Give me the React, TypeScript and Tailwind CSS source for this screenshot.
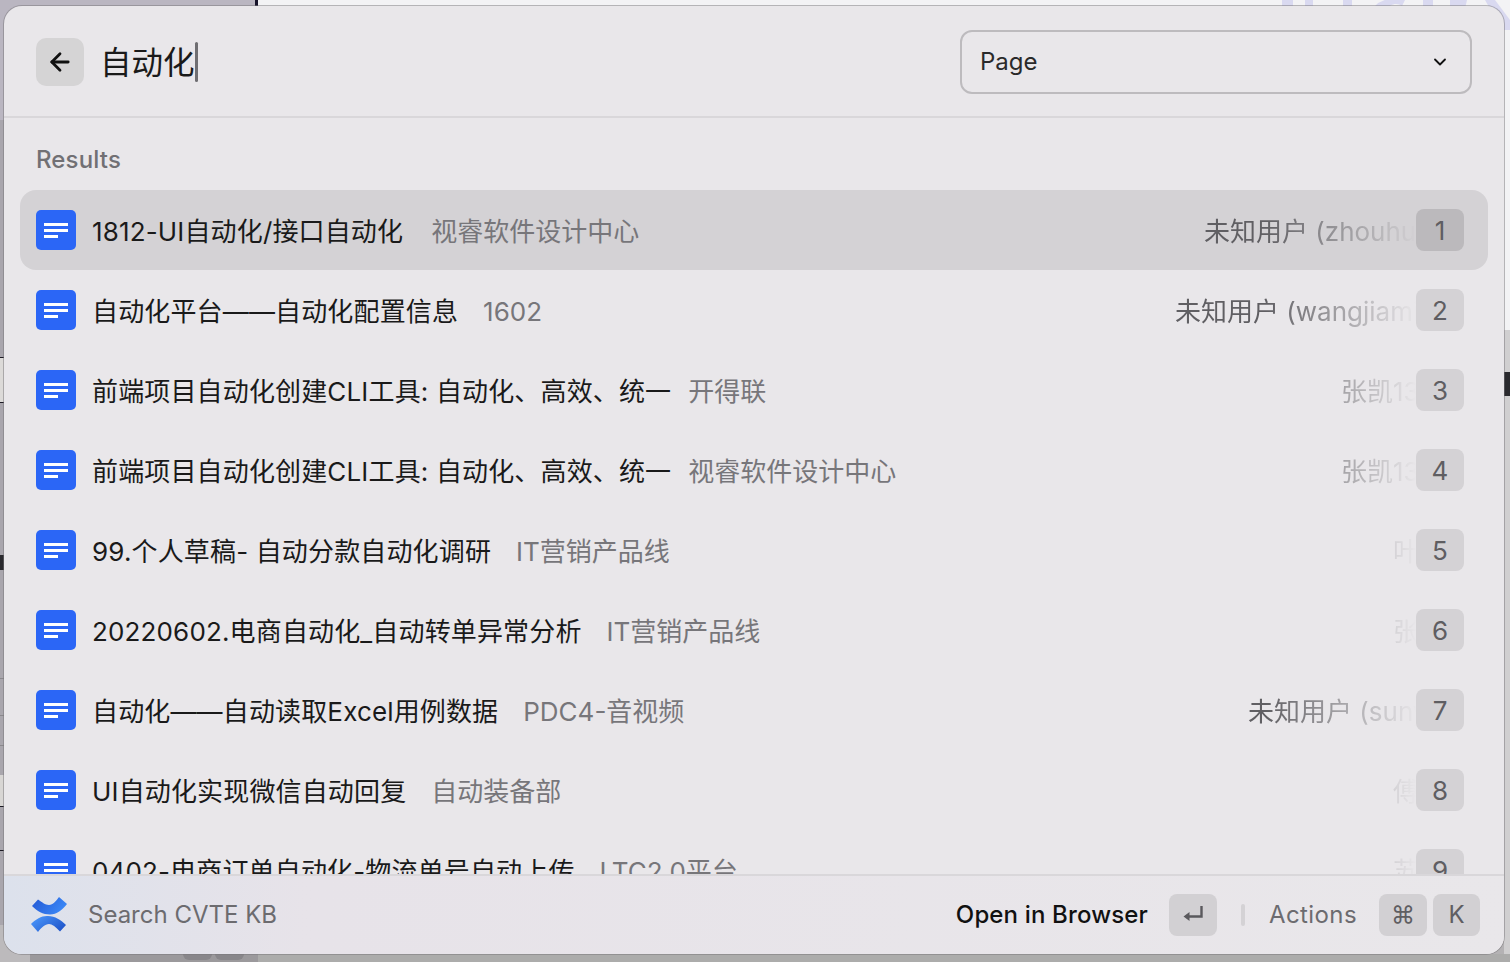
import { ArrowLeft, ChevronDown } from "lucide-react";

type Row = {
  title: string;
  space: string;
  spaceGap: string;
  author: string;
  authorWidth: string;
};

const rows: Row[] = [
  { title: "1812-UI自动化/接口自动化", space: "视睿软件设计中心", spaceGap: "ml-[28px]", author: "未知用户 (zhouhui)", authorWidth: "w-[212px]" },
  { title: "自动化平台——自动化配置信息", space: "1602", spaceGap: "ml-[25px]", author: "未知用户 (wangjiaming)", authorWidth: "w-[241px]" },
  { title: "前端项目自动化创建CLI工具: 自动化、高效、统一", space: "开得联", spaceGap: "ml-[17px]", author: "张凯1314", authorWidth: "w-[75px]" },
  { title: "前端项目自动化创建CLI工具: 自动化、高效、统一", space: "视睿软件设计中心", spaceGap: "ml-[17px]", author: "张凯1314", authorWidth: "w-[75px]" },
  { title: "99.个人草稿- 自动分款自动化调研", space: "IT营销产品线", spaceGap: "ml-[25px]", author: "叶子", authorWidth: "w-[23px]" },
  { title: "20220602.电商自动化_自动转单异常分析", space: "IT营销产品线", spaceGap: "ml-[25px]", author: "张三", authorWidth: "w-[23px]" },
  { title: "自动化——自动读取Excel用例数据", space: "PDC4-音视频", spaceGap: "ml-[25px]", author: "未知用户 (sunyang)", authorWidth: "w-[168px]" },
  { title: "UI自动化实现微信自动回复", space: "自动装备部", spaceGap: "ml-[25px]", author: "傅强", authorWidth: "w-[23px]" },
  { title: "0402-电商订单自动化-物流单号自动上传", space: "LTC2.0平台", spaceGap: "ml-[25px]", author: "苏宁", authorWidth: "w-[23px]" },
];

function DocIcon() {
  return (
    <div className="flex h-10 w-10 shrink-0 flex-col justify-center gap-[3px] rounded-[5px] bg-[#2b66f6] pl-2">
      <div className="h-[3px] w-6 bg-white" />
      <div className="h-[3px] w-6 bg-white" />
      <div className="h-[3px] w-[14px] bg-white" />
    </div>
  );
}

function ConfluenceLogo() {
  return (
    <svg width="46" height="46" viewBox="0 0 46 46" className="shrink-0">
      <defs>
        <linearGradient id="swoopA" x1="0" y1="0" x2="1" y2="0.4">
          <stop offset="0" stopColor="#2257d4" />
          <stop offset="1" stopColor="#3a86f5" />
        </linearGradient>
        <linearGradient id="swoopB" x1="0" y1="0.2" x2="1" y2="0.8">
          <stop offset="0" stopColor="#4a96fa" />
          <stop offset="1" stopColor="#1d52c8" />
        </linearGradient>
      </defs>
      <path d="M6 14 L12 7.500 C16 10 19 13 23 13 C27 13 30 9 33 5 L41 12 C36 18 31 22.500 24 22.500 C17 22.500 11 19 6 14 Z" fill="url(#swoopA)" />
      <path d="M5 32 C10 27 16 23.500 22 24 C29 24 35 28 40 33 L34 39.500 C30 35 26 32 23 32 C19 32 15 36 12 40 Z" fill="url(#swoopB)" />
    </svg>
  );
}

function ReturnIcon() {
  return (
    <svg width="20" height="16" viewBox="0 0 20 16" className="mb-[3px] text-[#5a595d]">
      <path d="M5 10.500 H18.500 V0" fill="none" stroke="currentColor" strokeWidth="2.400" />
      <path d="M0.500 10.500 L6.500 6 V15 Z" fill="currentColor" />
    </svg>
  );
}

function DesktopBehind() {
  return (
    <>
      <div className="absolute left-0 top-0 h-[962px] w-[258px] bg-[#a9a6ad]" />
      <div className="absolute left-0 top-0 h-[120px] w-[255px] bg-[#bab6c1]" />
      <div className="absolute left-[255px] top-0 h-[6px] w-[3px] bg-[#17132a]" />
      <div className="absolute right-0 top-0 h-[330px] w-[1252px] bg-[#f3f3f5]" />
      <div className="absolute right-0 top-[330px] h-[624px] w-[6px] bg-[#d0cfd0]" />
      <div className="absolute right-0 top-[372px] h-6 w-[6px] bg-[#2a2a2e]" />
      <div className="absolute left-0 top-[357px] h-[46px] w-1 border-y border-[#1c1a24] bg-[#dcdad8]" />
      <div className="absolute left-0 top-[555px] h-[15px] w-1 bg-[#2a2a2e]" />
      <div className="absolute left-0 top-[678px] h-px w-1 bg-[#8a888c]" />
      <div className="absolute left-0 top-[715px] h-px w-1 bg-[#8a888c]" />
      <div className="absolute left-0 top-[745px] h-px w-1 bg-[#8a888c]" />
      <div className="absolute left-0 top-[775px] h-8 w-1 border-b border-[#1c1a24] bg-[#d8d6d4]" />
      <div className="absolute left-0 top-[850px] h-px w-1 bg-[#1c1a24]" />
      <div className="absolute left-0 top-[925px] h-[37px] w-[30px] bg-[#bcbabc]" />
      <div className="absolute left-[30px] top-[954px] h-2 w-[228px] bg-[#9b999c]" />
      <div className="absolute left-[183px] top-[954px] h-[6px] w-[29px] rounded-b-md bg-[#88868a]" />
      <div className="absolute left-[215px] top-[954px] h-[6px] w-[29px] rounded-b-md bg-[#88868a]" />
      <div className="absolute left-[258px] top-[954px] h-2 w-[1252px] bg-[#acacab]" />
      <svg width="240" height="30" viewBox="0 0 240 30" className="absolute left-[1270px] top-0 text-[#d9d9f0]">
        <path d="M12 0 H23 V30 H12 Z M35 0 H43 V30 H35 Z M73 0 H82 V30 H73 Z M105 6 A20 20 0 0 1 125 0 H135 L132 6 A10 10 0 0 0 118 8 Z M153 0 H163 V30 H153 Z M180 0 H197 L190 30 H180 Z M215 0 H225 L240 20 V30 H232 Z" fill="currentColor" />
      </svg>
    </>
  );
}

function ResultRow({ row, index }: { row: Row; index: number }) {
  const selected = index === 0;
  return (
    <div
      className={`mx-4 flex h-20 shrink-0 items-center rounded-2xl pl-4 pr-6 ${selected ? "bg-[#d4d2d5]" : ""}`}
    >
      <DocIcon />
      <span className="ml-4 whitespace-nowrap pt-0.5 tracking-[0.15px] text-[#1a1a1a]">{row.title}</span>
      <span className={`whitespace-nowrap pt-0.5 text-[#77767a] ${row.spaceGap}`}>{row.space}</span>
      <div className="ml-auto flex w-[300px] justify-end pt-0.5 [mask-image:linear-gradient(to_right,black_50%,transparent_100%)]">
        <div className={`overflow-hidden whitespace-nowrap text-[#605f63] ${row.authorWidth}`}>{row.author}</div>
      </div>
      <div
        className={`flex h-[42px] w-12 shrink-0 items-center justify-center rounded-lg text-[#5f5e62] ${selected ? "bg-[#bbb9bc]" : "bg-[#d4d2d5]"}`}
      >
        {index + 1}
      </div>
    </div>
  );
}

export default function App() {
  return (
    <div className="relative flex h-[962px] w-[1510px] overflow-hidden bg-[#b4b2b4] font-['Inter','Noto_Sans_CJK_SC',sans-serif]">
      <DesktopBehind />

      <div className="absolute left-1 top-[6px] flex h-[948px] w-[1500px] flex-col overflow-hidden rounded-[18px] bg-[#e9e7ea] shadow-[0_0_0_1px_rgba(120,118,122,0.5)]">
        <header className="flex h-[112px] shrink-0 items-center border-b-2 border-[#d9d7da] pl-8 pr-8 pt-[2px]">
          <div className="flex h-12 w-12 shrink-0 items-center justify-center rounded-[10px] bg-[#d5d4d5] text-[#111]">
            <ArrowLeft size={28} strokeWidth={2.4} />
          </div>
          <div className="ml-4 flex h-12 items-center text-[31.5px] text-[#1a1a1a]">
            <span className="pt-[2px]">自动化</span>
            <span className="h-10 w-[3px] rounded-sm bg-[#6f6e72]" />
          </div>
          <div className="ml-auto flex h-16 w-[512px] items-center justify-between rounded-[12px] border-2 border-[#bdbbbe] pl-[18px] pr-[20px] text-[24px] text-[#2a2a2a]">
            Page
            <ChevronDown size={20} strokeWidth={2.2} className="text-[#111]" />
          </div>
        </header>

        <div className="flex min-h-0 flex-1 flex-col overflow-hidden text-[26px]">
          <div className="h-[72px] shrink-0 pl-8 pt-[27px] text-[24px] font-medium leading-[30px] tracking-[0.15px] text-[#717074]">
            Results
          </div>
          {rows.map((row, index) => (
            <ResultRow key={index} row={row} index={index} />
          ))}
        </div>

        <footer className="flex h-20 shrink-0 items-center border-t-2 border-[#d9d7da] bg-gradient-to-r from-[#dce1ec] via-[#e7e3e9] via-20% to-[#e9e7ea] pl-[22px] pr-6 text-[24px]">
          <ConfluenceLogo />
          <span className="ml-4 text-[#6c6b6f]">Search CVTE KB</span>
          <span className="ml-auto font-medium tracking-[0.15px] text-[#111]">Open in Browser</span>
          <div className="ml-[21px] flex h-[42px] w-12 items-center justify-center rounded-lg bg-[#d2d0d3]">
            <ReturnIcon />
          </div>
          <div className="ml-6 h-[22px] w-1 rounded-sm bg-[#d4d2d5]" />
          <span className="ml-6 tracking-[0.4px] text-[#6c6b6f]">Actions</span>
          <div className="ml-[22px] flex h-[42px] w-12 items-center justify-center rounded-lg bg-[#d2d0d3] text-[#5f5e62]">⌘</div>
          <div className="ml-[6px] flex h-[42px] w-[47px] items-center justify-center rounded-lg bg-[#d2d0d3] text-[#5f5e62]">K</div>
        </footer>
      </div>
    </div>
  );
}
